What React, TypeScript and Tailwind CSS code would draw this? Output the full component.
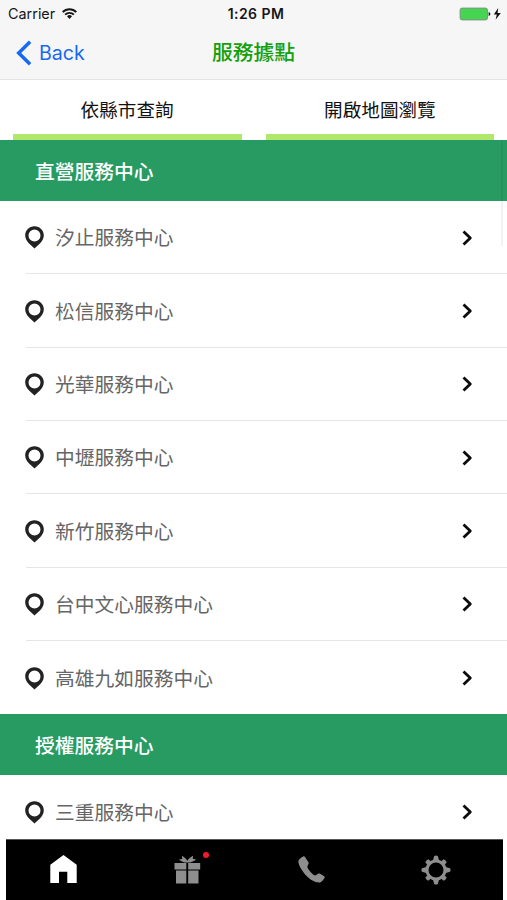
const directCenters = [
  '汐止服務中心',
  '松信服務中心',
  '光華服務中心',
  '中壢服務中心',
  '新竹服務中心',
  '台中文心服務中心',
  '高雄九如服務中心',
];
const authorizedCenters = ['三重服務中心'];

function WifiIcon() {
  return (
    <svg className="ml-[7px] h-[11px] w-[15px]" viewBox="0 0 15 11" fill="none" stroke="#161616" strokeWidth="1.9">
      <path d="M0.7 4.1a9.6 9.6 0 0 1 13.6 0" />
      <path d="M3.1 6.7a6.2 6.2 0 0 1 8.8 0" />
      <path d="M5 8.3a3.6 3.6 0 0 1 5 0L7.5 10.9Z" fill="#161616" stroke="none" />
    </svg>
  );
}

function PinIcon() {
  return (
    <svg className="h-[23px] w-[19px]" viewBox="0 0 19 23">
      <path
        fillRule="evenodd"
        fill="#222"
        d="M9.5 0.2C4.3 0.2 0.2 4.2 0.2 9.3c0 3.4 1.7 5.9 3.9 8.3 1.7 1.9 3.7 3.2 5.4 4.9 1.7-1.7 3.7-3 5.4-4.9 2.2-2.4 3.9-4.9 3.9-8.3 0-5.1-4.1-9.1-9.3-9.1Zm0 3.3a6 6 0 1 1 0 12 6 6 0 0 1 0-12Z"
      />
    </svg>
  );
}

function CenterRow({ name, divider }: { name: string; divider: boolean }) {
  return (
    <li
      className={`ml-[26px] flex h-[73.35px] shrink-0 items-center pr-[34px] ${
        divider ? 'border-b-[1.5px] border-[#e6e6e6]' : ''
      }`}
    >
      <span className="-ml-px mt-px">
        <PinIcon />
      </span>
      <span className="ml-[11px] flex-1 pt-[2px] text-[19.75px] leading-[28px] text-[#666]">{name}</span>
      <svg className="mt-px h-4 w-[11px]" viewBox="0 0 11 16" fill="none" stroke="#0c0c0c" strokeWidth="2.8">
        <path d="M1.5 1.4 8.3 8 1.5 14.6" strokeLinejoin="round" />
      </svg>
    </li>
  );
}

function SectionHeader({ title }: { title: string }) {
  return (
    <h2 className="flex h-[60.6px] shrink-0 items-center bg-[#289b63] pl-[35px] pt-[2px] text-[19.75px] font-medium leading-[28px] text-white">
      {title}
    </h2>
  );
}

function Tab({ label }: { label: string }) {
  return (
    <button className="flex flex-1 justify-center border-b-[6px] border-[#b0e86c] text-[18.6px] leading-[28px] text-[#111]">
      <span className="mt-4">{label}</span>
    </button>
  );
}

export default function App() {
  return (
    <div className="flex h-[900px] w-[507px] flex-col overflow-hidden bg-white font-['Inter','Noto_Sans_CJK_TC',sans-serif]">
      <header className="h-20 shrink-0 border-b-[1.5px] border-[#e4e4e4] bg-[#f6f6f6]">
        <div className="grid h-[27px] grid-cols-3 items-center text-[#161616]">
          <div className="flex items-center pl-2 text-[14.4px]">
            <span>Carrier</span>
            <WifiIcon />
          </div>
          <div className="pl-[5px] text-center text-[14px] font-semibold tracking-[0.45px]">1:26 PM</div>
          <div className="flex items-center justify-end pr-[6px]">
            <svg className="h-[14px] w-[42px]" viewBox="0 0 42 14">
              <rect x="1.1" y="1.1" width="27.4" height="11.8" rx="2" fill="#45d552" stroke="#7d9580" strokeWidth="1" />
              <path d="M29.6 5q1.8.4 1.8 2t-1.8 2Z" fill="#111" />
              <path d="M39.2 1 34.8 7.6h3l-1.2 5.2 5.2-6.9h-3.2Z" fill="#111" />
            </svg>
          </div>
        </div>
        <div className="grid h-[51px] grid-cols-3 items-center">
          <button className="flex items-center pl-4 text-[19.6px] leading-[28px] text-[#1769f2]">
            <svg className="h-[26px] w-4" viewBox="0 0 16 26" fill="none" stroke="currentColor" strokeWidth="3.5">
              <path d="M14.1 1.8 2.7 13l11.4 11.2" />
            </svg>
            <span className="ml-[7px]">Back</span>
          </button>
          <h1 className="text-center text-[20.8px] font-medium leading-[30px] text-[#13a00b]">服務據點</h1>
        </div>
      </header>
      <nav className="flex h-[60.4px] shrink-0 gap-6 px-[12.7px]">
        <Tab label="依縣市查詢" />
        <Tab label="開啟地圖瀏覽" />
      </nav>
      <main className="relative flex min-h-0 flex-1 flex-col overflow-hidden">
        <SectionHeader title="直營服務中心" />
        <ul className="flex shrink-0 flex-col">
          {directCenters.map((name, i) => (
            <CenterRow key={name} name={name} divider={i < directCenters.length - 1} />
          ))}
        </ul>
        <SectionHeader title="授權服務中心" />
        <ul className="flex shrink-0 flex-col">
          {authorizedCenters.map((name) => (
            <CenterRow key={name} name={name} divider={false} />
          ))}
        </ul>
        <div className="absolute right-1 top-0 h-[106px] w-[2px] bg-black/5" />
      </main>
      <footer className="ml-[6px] mr-1 grid h-[61px] shrink-0 grid-cols-[114px_135px_113px_135px] items-center border-t border-[#555] bg-black pb-px text-[#8e8e8e]">
        <div className="flex justify-center">
          <svg className="h-[29px] w-[27px]" viewBox="0 0 27 29" fill="white">
            <path d="M13.5 0 26.7 9.8V28H17.3V16.7H9V28H.3V9.8Z" />
          </svg>
        </div>
        <div className="flex justify-center">
          <div className="relative">
            <svg className="h-[29px] w-[27px]" viewBox="0 0 27 29" fill="currentColor">
              <path d="M.5 8H12.3v6.4H.5ZM14.2 8h12v6.4h-12ZM2 15.5h10.3v13H2ZM14.2 15.5h10.3v13H14.2Z" />
              <path d="M13.3 7.6C10.2 7.8 7.4 6.5 4.8 4.4L8.2 4 7.9.7c2.9 1.5 4.5 3.3 5.4 5.2.9-1.9 2.8-3.7 5.7-5.2l-.2 3.1 3.4.6c-2.6 2.1-5.7 3.4-8.9 3.2Z" />
            </svg>
            <span className="absolute -right-[7.5px] -top-[3px] h-[6px] w-[6px] rounded-full bg-[#f01c2c]" />
          </div>
        </div>
        <div className="flex justify-center">
          <svg className="h-[27px] w-[27px]" viewBox="0 0 27 27" fill="currentColor">
            <path d="M5.2.4C3.3 1.3.7 3 .4 5.1c-.4 4 4.4 11.1 8.2 15 3.7 3.8 8.3 6.6 12.7 6.4 2.2-.1 4.4-3.2 5.4-5.1.2-.5-.1-.9-.5-1.2l-4.1-2.4c-.6-.3-1.4-.3-1.9 0l-3 1.6c-1.7.3-7.7-6.2-7.8-8.4-.1-1 .6-2.2 1.1-3 .3-.5.3-1 .1-1.5L7 1C6.6.3 5.8.1 5.2.4Z" />
          </svg>
        </div>
        <div className="flex justify-center">
          <svg className="h-[30px] w-[30px]" viewBox="-15 -15 30 30" fill="currentColor">
            {[0, 45, 90, 135, 180, 225, 270, 315].map((angle) => (
              <path
                key={angle}
                d={angle % 90 === 0 ? 'M-3.2-9-1.8-14Q0-15.2 1.8-14L3.2-9Z' : 'M-2.5-9-2.1-13Q0-14 2.1-13L2.5-9Z'}
                transform={`rotate(${angle})`}
              />
            ))}
            <circle r="9" fill="none" stroke="currentColor" strokeWidth="3" />
          </svg>
        </div>
      </footer>
    </div>
  );
}
